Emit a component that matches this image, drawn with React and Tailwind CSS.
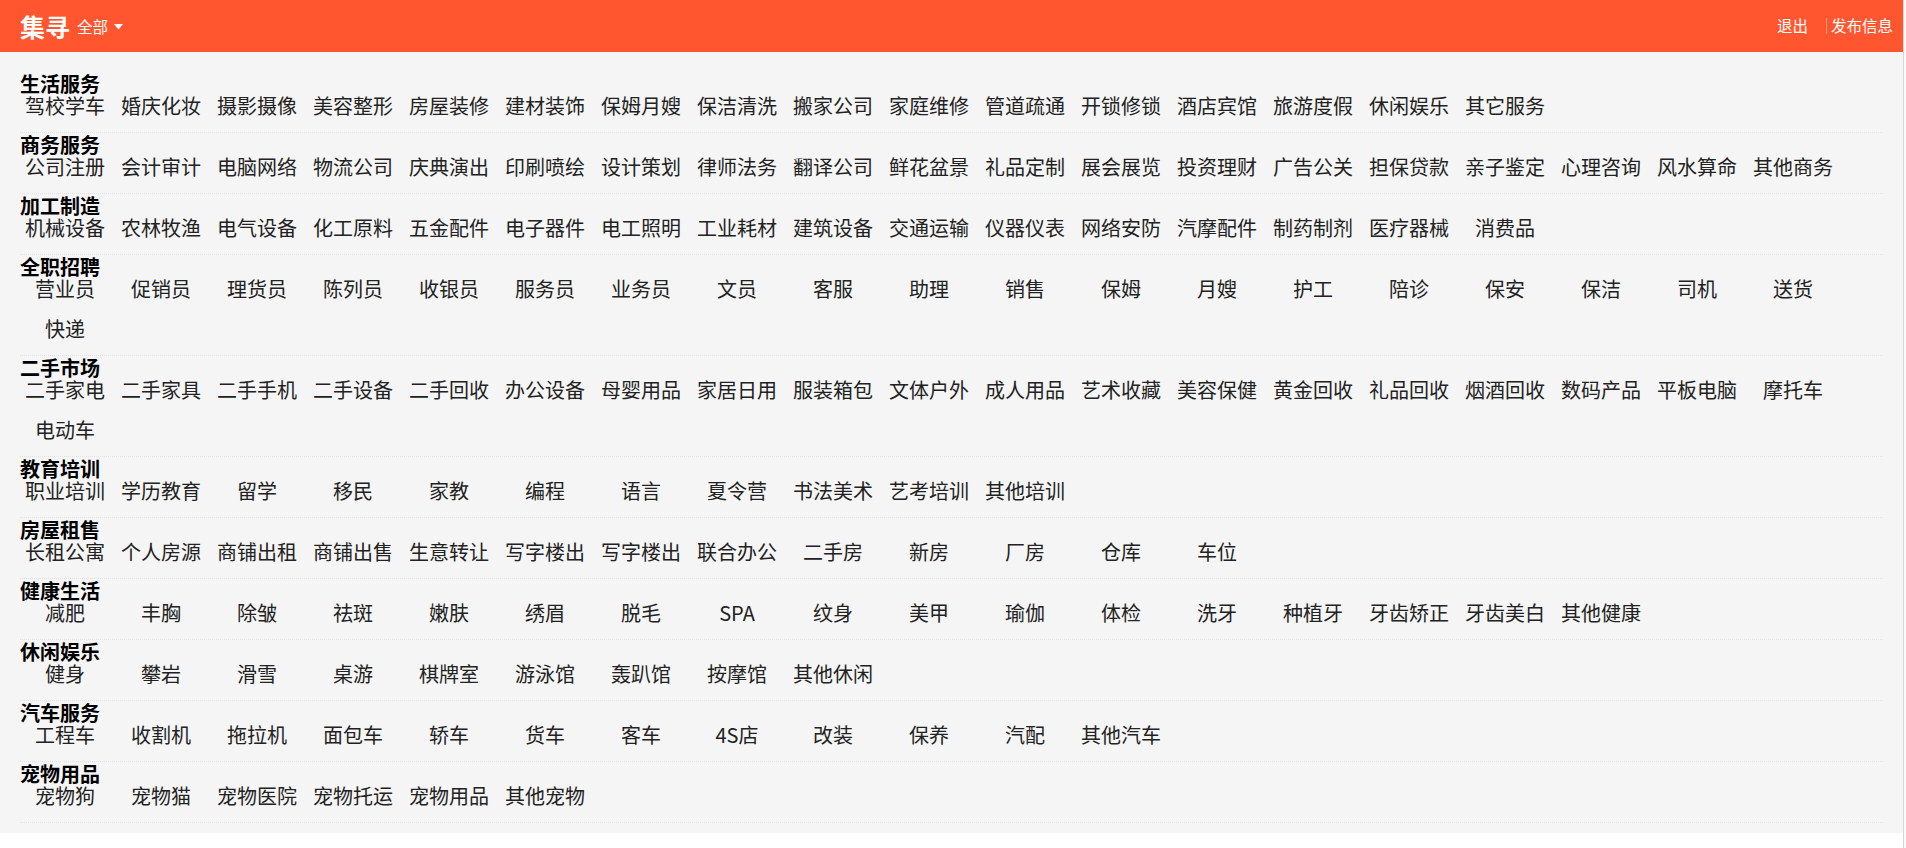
import React from 'react';

const categories = [
  {
    name: '生活服务',
    items: ['驾校学车', '婚庆化妆', '摄影摄像', '美容整形', '房屋装修', '建材装饰', '保姆月嫂', '保洁清洗', '搬家公司', '家庭维修', '管道疏通', '开锁修锁', '酒店宾馆', '旅游度假', '休闲娱乐', '其它服务'],
  },
  {
    name: '商务服务',
    items: ['公司注册', '会计审计', '电脑网络', '物流公司', '庆典演出', '印刷喷绘', '设计策划', '律师法务', '翻译公司', '鲜花盆景', '礼品定制', '展会展览', '投资理财', '广告公关', '担保贷款', '亲子鉴定', '心理咨询', '风水算命', '其他商务'],
  },
  {
    name: '加工制造',
    items: ['机械设备', '农林牧渔', '电气设备', '化工原料', '五金配件', '电子器件', '电工照明', '工业耗材', '建筑设备', '交通运输', '仪器仪表', '网络安防', '汽摩配件', '制药制剂', '医疗器械', '消费品'],
  },
  {
    name: '全职招聘',
    items: ['营业员', '促销员', '理货员', '陈列员', '收银员', '服务员', '业务员', '文员', '客服', '助理', '销售', '保姆', '月嫂', '护工', '陪诊', '保安', '保洁', '司机', '送货', '快递'],
  },
  {
    name: '二手市场',
    items: ['二手家电', '二手家具', '二手手机', '二手设备', '二手回收', '办公设备', '母婴用品', '家居日用', '服装箱包', '文体户外', '成人用品', '艺术收藏', '美容保健', '黄金回收', '礼品回收', '烟酒回收', '数码产品', '平板电脑', '摩托车', '电动车'],
  },
  {
    name: '教育培训',
    items: ['职业培训', '学历教育', '留学', '移民', '家教', '编程', '语言', '夏令营', '书法美术', '艺考培训', '其他培训'],
  },
  {
    name: '房屋租售',
    items: ['长租公寓', '个人房源', '商铺出租', '商铺出售', '生意转让', '写字楼出', '写字楼出', '联合办公', '二手房', '新房', '厂房', '仓库', '车位'],
  },
  {
    name: '健康生活',
    items: ['减肥', '丰胸', '除皱', '祛斑', '嫩肤', '绣眉', '脱毛', 'SPA', '纹身', '美甲', '瑜伽', '体检', '洗牙', '种植牙', '牙齿矫正', '牙齿美白', '其他健康'],
  },
  {
    name: '休闲娱乐',
    items: ['健身', '攀岩', '滑雪', '桌游', '棋牌室', '游泳馆', '轰趴馆', '按摩馆', '其他休闲'],
  },
  {
    name: '汽车服务',
    items: ['工程车', '收割机', '拖拉机', '面包车', '轿车', '货车', '客车', '4S店', '改装', '保养', '汽配', '其他汽车'],
  },
  {
    name: '宠物用品',
    items: ['宠物狗', '宠物猫', '宠物医院', '宠物托运', '宠物用品', '其他宠物'],
  },
];

const App = () => {
  return (
    <div className="min-h-screen flex bg-white font-['Noto_Sans_CJK_SC','Noto_Sans',sans-serif]">
      <div className="flex-1 flex flex-col">
        {/* --- Top bar --- */}
        <header className="h-[52px] bg-[#ff5630] flex items-center justify-between pl-5 pr-[10px] text-white">
          <div className="flex items-center">
            <span className="text-[25px] font-bold leading-none">集寻</span>
            <button className="ml-[7px] flex items-center text-[15.5px] leading-none mt-[2px]">
              全部
              <svg width="9" height="6" viewBox="0 0 9 6" className="ml-[6px]">
                <path d="M0 0 L9 0 L4.5 5.5 Z" fill="#ffffff" />
              </svg>
            </button>
          </div>
          <div className="flex items-center text-[15.5px] leading-none">
            <a className="cursor-pointer">退出</a>
            <span className="ml-[18px] w-px h-[16px] bg-white/40"></span>
            <a className="ml-[4px] cursor-pointer">发布信息</a>
          </div>
        </header>

        {/* --- Category list --- */}
        <div className="bg-[#f5f5f5] px-5 pt-5 pb-[10px]">
          {categories.map((cat) => (
            <section key={cat.name} className="border-b border-dotted border-[#e2e2e2]">
              <h3 className="pt-[2px] text-[20px] leading-[20px] font-bold text-black">{cat.name}</h3>
              <div className="flex flex-wrap gap-x-[6px] -mb-[2px]">
                {cat.items.map((item, idx) => (
                  <a
                    key={idx}
                    className="w-[90px] h-[40px] text-center text-[20px] leading-[24px] text-[#222] cursor-pointer"
                  >
                    {item}
                  </a>
                ))}
              </div>
            </section>
          ))}
        </div>
      </div>
      {/* scroll rail */}
      <div className="w-[3px] border-l border-[#d6d6d6] bg-[#fafafa]"></div>
    </div>
  );
};

export default App;
